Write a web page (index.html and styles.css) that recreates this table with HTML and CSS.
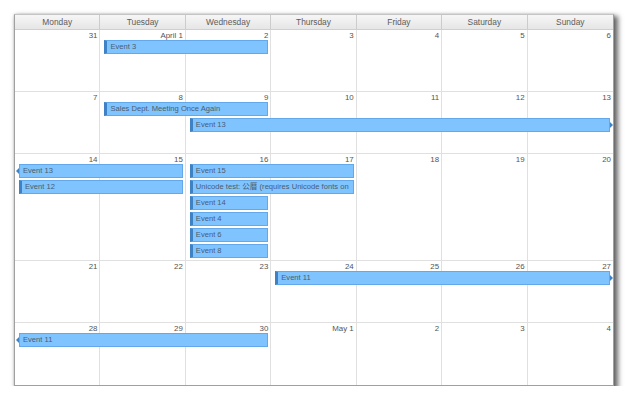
FILE: index.html
```html
<!DOCTYPE html>
<html>
<head>
<meta charset="utf-8">
<link rel="stylesheet" href="styles.css">
</head>
<body>
<div class="cal">
  <div class="head">
    <div class="hd">Monday</div><div class="hd">Tuesday</div><div class="hd">Wednesday</div><div class="hd">Thursday</div><div class="hd">Friday</div><div class="hd">Saturday</div><div class="hd last">Sunday</div>
  </div>

  <div class="week short">
    <div class="day c1"><span class="num">31</span></div>
    <div class="day c2"><span class="num">April 1</span></div>
    <div class="day c3"><span class="num">2</span></div>
    <div class="day c4"><span class="num">3</span></div>
    <div class="day c5"><span class="num">4</span></div>
    <div class="day c6"><span class="num">5</span></div>
    <div class="day c7"><span class="num">6</span></div>
    <div class="ev c2 s2 r1">Event 3</div>
  </div>

  <div class="week short">
    <div class="day c1"><span class="num">7</span></div>
    <div class="day c2"><span class="num">8</span></div>
    <div class="day c3"><span class="num">9</span></div>
    <div class="day c4"><span class="num">10</span></div>
    <div class="day c5"><span class="num">11</span></div>
    <div class="day c6"><span class="num">12</span></div>
    <div class="day c7"><span class="num">13</span></div>
    <div class="ev c2 s2 r1">Sales Dept. Meeting Once Again</div>
    <div class="ev c3 s5 r2 cont-r">Event 13</div>
  </div>

  <div class="week tall">
    <div class="day c1"><span class="num">14</span></div>
    <div class="day c2"><span class="num">15</span></div>
    <div class="day c3"><span class="num">16</span></div>
    <div class="day c4"><span class="num">17</span></div>
    <div class="day c5"><span class="num">18</span></div>
    <div class="day c6"><span class="num">19</span></div>
    <div class="day c7"><span class="num">20</span></div>
    <div class="ev c1 s2 r1 cont-l">Event 13</div>
    <div class="ev c3 s2 r1">Event 15</div>
    <div class="ev c1 s2 r2">Event 12</div>
    <div class="ev c3 s2 r2">Unicode test: 公曆 (requires Unicode fonts on the client side)</div>
    <div class="ev c3 s1 r3">Event 14</div>
    <div class="ev c3 s1 r4">Event 4</div>
    <div class="ev c3 s1 r5">Event 6</div>
    <div class="ev c3 s1 r6">Event 8</div>
  </div>

  <div class="week short">
    <div class="day c1"><span class="num">21</span></div>
    <div class="day c2"><span class="num">22</span></div>
    <div class="day c3"><span class="num">23</span></div>
    <div class="day c4"><span class="num">24</span></div>
    <div class="day c5"><span class="num">25</span></div>
    <div class="day c6"><span class="num">26</span></div>
    <div class="day c7"><span class="num">27</span></div>
    <div class="ev c4 s4 r1 cont-r">Event 11</div>
  </div>

  <div class="week short lastweek">
    <div class="day c1"><span class="num">28</span></div>
    <div class="day c2"><span class="num">29</span></div>
    <div class="day c3"><span class="num">30</span></div>
    <div class="day c4"><span class="num">May 1</span></div>
    <div class="day c5"><span class="num">2</span></div>
    <div class="day c6"><span class="num">3</span></div>
    <div class="day c7"><span class="num">4</span></div>
    <div class="ev c1 s3 r1 cont-l">Event 11</div>
  </div>
</div>
</body>
</html>
```

FILE: styles.css
```css
html, body {
  margin: 0;
  padding: 0;
  background: #ffffff;
}
body {
  padding: 14px 0 0 14px;
  font-family: "Liberation Sans", Arial, "Noto Sans CJK SC", sans-serif;
  color: #555;
}
.cal {
  width: 600px;
  box-sizing: border-box;
  border: 1px solid #a0a0a0;
  border-top-color: #c4c4c4;
  background: #fff;
  box-shadow: 3px 3px 5px 1px rgba(0, 0, 0, 0.6), 0 0 2px rgba(0, 0, 0, 0.15);
}
.head {
  display: grid;
  grid-template-columns: repeat(7, 1fr);
  height: 14px;
  border-bottom: 1px solid #cfcfcf;
  background: linear-gradient(#f6f6f6, #e6e6e6);
}
.hd {
  font-size: 8.4px;
  line-height: 14px;
  text-align: center;
  color: #5c5c5c;
  border-right: 1px solid #cccccc;
}
.hd.last { border-right: none; }

.week {
  display: grid;
  grid-template-columns: repeat(7, 1fr);
}
.week.short {
  height: 62px;
  grid-template-rows: 10px 16px 16px 1fr;
}
.week.tall {
  height: 107px;
  grid-template-rows: 10px repeat(6, 16px) 1fr;
}
.day {
  grid-row: 1 / -1;
  border-right: 1px solid #e0e0e0;
  border-bottom: 1px solid #e0e0e0;
  text-align: right;
  font-size: 7.9px;
  line-height: 10px;
  padding: 1px 2px 0 0;
  color: #555;
}
.day.c7 { border-right: none; }
.lastweek .day { border-bottom: none; }
.num { display: block; }

.c1 { grid-column-start: 1; }
.c2 { grid-column-start: 2; }
.c3 { grid-column-start: 3; }
.c4 { grid-column-start: 4; }
.c5 { grid-column-start: 5; }
.c6 { grid-column-start: 6; }
.c7 { grid-column-start: 7; }
.s1 { grid-column-end: span 1; }
.s2 { grid-column-end: span 2; }
.s3 { grid-column-end: span 3; }
.s4 { grid-column-end: span 4; }
.s5 { grid-column-end: span 5; }
.r1 { grid-row: 2; }
.r2 { grid-row: 3; }
.r3 { grid-row: 4; }
.r4 { grid-row: 5; }
.r5 { grid-row: 6; }
.r6 { grid-row: 7; }

.ev {
  position: relative;
  height: 14px;
  box-sizing: border-box;
  margin: 0 3px 0 4px;
  background: #80c4ff;
  border: 1px solid #62a8ea;
  border-left: 3px solid #3f82c4;
  color: #4a5d70;
  font-size: 7.6px;
  line-height: 10px;
  padding: 1px 0 0 3px;
  overflow: hidden;
}
.ev.cont-l {
  overflow: visible;
  border-left: 1px solid #62a8ea;
  padding-left: 3px;
}
.ev.cont-l::before {
  content: "";
  position: absolute;
  left: -4px;
  top: 3px;
  border-style: solid;
  border-width: 3px 3px 3px 0;
  border-color: transparent #3f82c4 transparent transparent;
}
.ev.cont-r {
  overflow: visible;
}
.ev.cont-r::after {
  content: "";
  position: absolute;
  right: -4px;
  top: 3px;
  border-style: solid;
  border-width: 3px 0 3px 3px;
  border-color: transparent transparent transparent #3f82c4;
}
```
